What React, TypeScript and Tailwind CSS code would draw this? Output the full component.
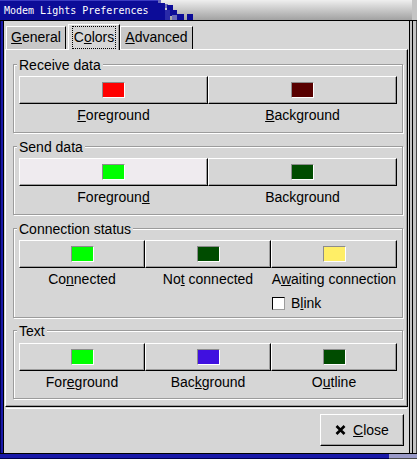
import React from "react";

const sans = "font-[family-name:Liberation_Sans,Arial,sans-serif]";
const raised =
  "border border-t-white border-l-white border-b-black border-r-black shadow-[inset_-1px_-1px_0_#9c9c9c]";

function Swatch({ color }: { color: string }) {
  return (
    <span
      className={`block w-[23px] h-[16px] border border-t-[#8c8c8c] border-l-[#8c8c8c] border-b-white border-r-white ${color}`}
    />
  );
}

function ColorButton({
  color,
  label,
  hot,
}: {
  color: string;
  label: React.ReactNode;
  hot?: boolean;
}) {
  return (
    <div className="flex flex-col items-center">
      <button
        type="button"
        className={`w-full h-[28px] flex items-center justify-center ${raised} ${
          hot ? "bg-[#efebef]" : "bg-[#d6d6d6]"
        }`}
      >
        <Swatch color={color} />
      </button>
      <span className="mt-[3px] leading-[16px] whitespace-nowrap">{label}</span>
    </div>
  );
}

function Frame({
  title,
  className,
  children,
}: {
  title: string;
  className: string;
  children: React.ReactNode;
}) {
  return (
    <div
      className={`relative border border-[#9c9c9c] shadow-[inset_1px_1px_0_#fff,1px_1px_0_#fff] px-[5px] ${className}`}
    >
      <span className="absolute -top-[8px] left-[3px] px-[2px] bg-[#d6d6d6] leading-[16px]">
        {title}
      </span>
      {children}
    </div>
  );
}

function Tab({ label, w }: { label: React.ReactNode; w: string }) {
  return (
    <div
      className={`${w} h-[23px] pt-[2px] border-t border-l border-t-white border-l-white border-r border-r-black bg-[#c8c8c8] text-center leading-[16px]`}
    >
      {label}
    </div>
  );
}

export default function App() {
  return (
    <div className={`w-[417px] h-[459px] flex flex-col bg-black text-black text-[14px] ${sans}`}>
      {/* title bar */}
      <div className="h-[21px] flex border-b border-black shrink-0">
        <div className="w-[158px] bg-[#0c0c98] border-t border-[#3a3ac0] pl-[4px] text-white text-[10px] leading-[19px] font-[family-name:DejaVu_Sans_Mono,monospace] whitespace-nowrap">
          Modem Lights Preferences
        </div>
        <div className="flex-1 relative bg-linear-to-b from-[#efefef] to-[#a2a2a2] border-r-[5px] border-r-[#c4c4c4]">
          <svg width="40" height="20" className="absolute left-0 top-0">
            <rect x="0" y="0" width="3" height="4" fill="#6a6ab8" />
            <rect x="0" y="3" width="7" height="17" fill="#0c0c98" />
            <rect x="7" y="4" width="3" height="4" fill="#7070b8" />
            <rect x="9" y="5" width="6" height="6" fill="#0c0c98" />
            <rect x="7" y="10" width="5" height="10" fill="#2a2aa8" />
            <rect x="12" y="10" width="7" height="6" fill="#0c0c98" />
            <rect x="14" y="15" width="5" height="5" fill="#6a6ab8" />
            <rect x="19" y="14" width="7" height="6" fill="#0c0c98" />
            <rect x="29" y="14" width="6" height="6" fill="#0c0c98" />
          </svg>
        </div>
      </div>

      <div className="flex-1 flex min-h-0">
        {/* left frame */}
        <div className="w-[4px] bg-[#1818a8] border-l border-[#00004a] border-r border-r-black" />

        {/* main area */}
        <div className="flex-1 flex flex-col bg-[#d6d6d6]">
          {/* tabs */}
          <div className="h-[28px] flex items-end pl-[2px] shrink-0">
            <Tab w="w-[60px]" label={<><u>G</u>eneral</>} />
            <div className="ml-[2px] w-[52px] h-[26px] -mb-px relative z-10 border-t border-l border-t-white border-l-white border-r border-r-black shadow-[inset_-1px_0_0_#9c9c9c] bg-[#d6d6d6] pt-[1px] px-[3px]">
              <div className="h-[23px] border border-dotted border-black pt-[2px] text-center leading-[16px]">
                C<u>o</u>lors
              </div>
            </div>
            <Tab w="w-[73px]" label={<><u>A</u>dvanced</>} />
          </div>

          {/* page */}
          <div className="mx-[1px] h-[358px] shrink-0 border border-t-white border-l-white border-b-black border-r-black shadow-[inset_-1px_-1px_0_#9c9c9c] pt-[14px] pl-[7px] pr-[4px] flex flex-col">
            <Frame title="Receive data" className="h-[69px] pt-[11px]">
              <div className="grid grid-cols-2">
                <ColorButton color="bg-[#ff0000]" label={<><u>F</u>oreground</>} />
                <ColorButton color="bg-[#580000]" label={<><u>B</u>ackground</>} />
              </div>
            </Frame>
            <Frame title="Send data" className="mt-[13px] h-[69px] pt-[11px]">
              <div className="grid grid-cols-2">
                <ColorButton hot color="bg-[#00ff00]" label={<>Foregroun<u>d</u></>} />
                <ColorButton color="bg-[#004c00]" label={<>Back<u>g</u>round</>} />
              </div>
            </Frame>
            <Frame title="Connection status" className="mt-[13px] h-[90px] pt-[11px]">
              <div className="grid grid-cols-3">
                <ColorButton color="bg-[#00ff00]" label={<>Co<u>n</u>nected</>} />
                <ColorButton color="bg-[#004c00]" label={<>No<u>t</u> connected</>} />
                <div className="flex flex-col">
                  <ColorButton color="bg-[#ffee66]" label={<>A<u>w</u>aiting connection</>} />
                  <label className="mt-[8px] h-[16px] flex items-center pl-[1px] leading-[16px]">
                    <span className="w-[13px] h-[13px] bg-white border border-t-black border-l-black border-b-[#9c9c9c] border-r-[#9c9c9c] mr-[6px]" />
                    B<u>l</u>ink
                  </label>
                </div>
              </div>
            </Frame>
            <Frame title="Text" className="mt-[12px] h-[69px] pt-[12px]">
              <div className="grid grid-cols-3">
                <ColorButton color="bg-[#00ff00]" label={<>For<u>e</u>ground</>} />
                <ColorButton color="bg-[#4010e0]" label={<>Bac<u>k</u>ground</>} />
                <ColorButton color="bg-[#004c00]" label={<>O<u>u</u>tline</>} />
              </div>
            </Frame>
          </div>

          <div className="mt-[1px] mx-[2px] h-[1px] bg-white shrink-0" />

          {/* action area */}
          <div className="flex-1 flex justify-end items-start pt-[5px] pr-[5px]">
            <button
              type="button"
              className={`w-[84px] h-[32px] bg-[#d6d6d6] flex items-center justify-center gap-[7px] leading-[16px] ${raised}`}
            >
              <svg width="11" height="10" viewBox="0 0 11 10">
                <path d="M1.5 1 L9.5 9 M9.5 1 L1.5 9" stroke="#000" strokeWidth="2.6" />
              </svg>
              <span>
                <u>C</u>lose
              </span>
            </button>
          </div>
        </div>

        {/* right frame */}
        <div className="w-[8px] bg-[#c4c4c4] border-l border-black shadow-[inset_-1px_0_0_#4a4a4a,inset_-4px_0_0_#c4c4c4,inset_-5px_0_0_#000]" />
      </div>

      {/* bottom frame */}
      <div className="h-[6px] flex shrink-0 border-t border-black">
        <div className="flex-1 bg-[#1818a8] border-b border-[#00004a]" />
        <div className="w-[28px] bg-[#9a9ac8] border-b border-[#4a4a4a]" />
      </div>
    </div>
  );
}
